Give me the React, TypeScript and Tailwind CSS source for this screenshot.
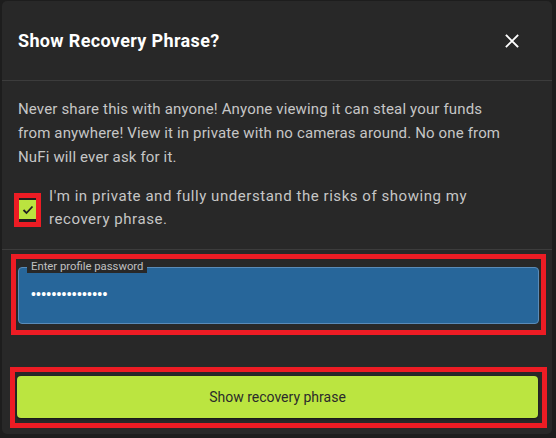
import React from "react";

export default function App() {
  return (
    <div
      className="w-[556px] h-[438px] bg-[#1d1d1d] pt-[1px] pl-[2px] overflow-hidden"
      style={{ fontFamily: "Roboto, 'Noto Sans', sans-serif" }}
    >
      <div className="w-[550px] h-[433px] rounded-[5px] bg-[#282828] flex flex-col">
        {/* header */}
        <div className="h-[80px] border-b border-[#3c3c3c] flex items-center justify-between pl-[16px] pr-[32px]">
          <h2 className="text-[18px] font-bold text-white tracking-[0.35px]">Show Recovery Phrase?</h2>
          <svg width="16" height="16" viewBox="0 0 16 16" className="mt-[1px]">
            <path d="M2.5 2.5 L13.5 13.5 M13.5 2.5 L2.5 13.5" stroke="#ffffff" strokeWidth="1.8" strokeLinecap="square" />
          </svg>
        </div>
        {/* body */}
        <div className="px-[16px] pt-[16px] border-b border-[#3c3c3c] h-[169px]">
          <p className="text-[15px] leading-[24px] text-[#c6c6c6] tracking-[0.15px]">
            Never share this with anyone! Anyone viewing it can steal your funds
            <br />
            from anywhere! View it in private with no cameras around. No one from
            <br />
            NuFi will ever ask for it.
          </p>
          <div className="mt-[16px] flex items-start">
            <div className="ml-[-4px] mt-[8px] border-[5px] border-[#ed1c24] bg-[#1f1f1f] w-[27px] h-[34px] flex flex-col">
              <div className="w-[17px] h-[19px] bg-[#bbe33f] flex items-center justify-center mt-[2px]">
                <svg width="12" height="10" viewBox="0 0 12 10">
                  <path d="M1.5 5 L4.5 8 L10.5 1.5" fill="none" stroke="#222" strokeWidth="1.8" />
                </svg>
              </div>
            </div>
            <p className="ml-[8px] text-[15px] leading-[23px] text-[#c6c6c6] tracking-[0.55px] w-[470px]">
              I'm in private and fully understand the risks of showing my
              <br />
              recovery phrase.
            </p>
          </div>
        </div>
        {/* password */}
        <div className="pl-[9px] pr-[4px] pt-[4px]">
          <div className="border-[5px] border-[#ed1c24] w-[535px] h-[81px] pt-[8px] px-[1px]">
            <div className="relative mx-[1px] h-[57px] rounded-[4px] border border-[#5a8bb8] bg-[#27669a] flex items-center pl-[12px]">
              <span className="absolute left-[8px] top-[-8px] px-[4px] bg-[#282828] text-[11.3px] leading-[13px] text-[#c0c0c0]">
                Enter profile password
              </span>
              <span
                className="text-white text-[14px] tracking-[0.2px] mt-[-2px]"
                style={{ fontFamily: "'Liberation Sans', sans-serif" }}
              >
                •••••••••••••••
              </span>
            </div>
          </div>
        </div>
        {/* button */}
        <div className="pl-[8px] pt-[32px]">
          <div className="border-[5px] border-[#ed1c24] w-[537px] h-[61px] pt-[4px] pl-[2px] pr-[4px]">
            <button className="w-full h-[42px] rounded-[4px] bg-[#bbe540] text-[14px] text-[#2b2b2b] shadow-[0_1px_2px_rgba(0,0,0,0.5)]">
              Show recovery phrase
            </button>
          </div>
        </div>
      </div>
    </div>
  );
}
